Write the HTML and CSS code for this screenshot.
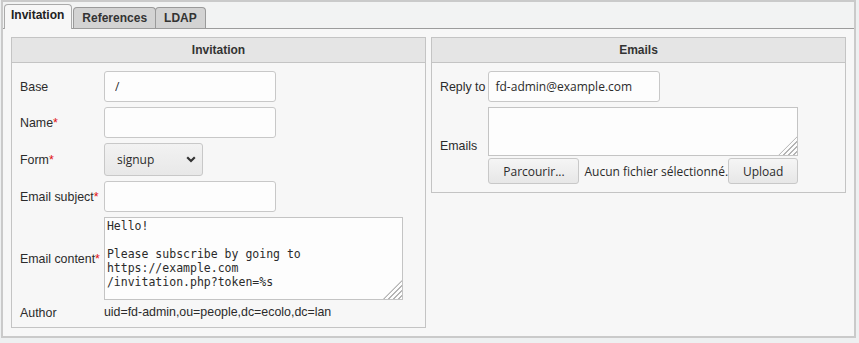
FILE: index.html
```html
<!DOCTYPE html>
<html lang="fr">
<head>
    <meta charset="UTF-8">
    <meta name="viewport" content="width=device-width, initial-scale=1.0">
    <title>Invitation</title>
    <link rel="stylesheet" href="styles.css">
</head>
<body>

    <div class="tabs-box">
        <ul class="tabs">
            <li class="tab active">Invitation</li>
            <li class="tab">References</li>
            <li class="tab">LDAP</li>
        </ul>

        <div class="tab-content">
            <section class="panel">
                <h3 class="panel-title">Invitation</h3>
                <div class="form-grid">
                    <label class="field-label">Base</label>
                    <div><input class="input input-base" type="text" value="/"></div>

                    <label class="field-label">Name<span class="req">*</span></label>
                    <div><input class="input" type="text"></div>

                    <label class="field-label">Form<span class="req">*</span></label>
                    <div>
                        <div class="select-wrap">
                            <select class="select">
                                <option>signup</option>
                            </select>
                            <svg class="chevron" width="10" height="7" viewBox="0 0 10 7">
                                <path d="M1.2 1.3 L5 5 L8.8 1.3" fill="none" stroke="#333" stroke-width="2.2"/>
                            </svg>
                        </div>
                    </div>

                    <label class="field-label">Email subject<span class="req">*</span></label>
                    <div><input class="input" type="text"></div>

                    <label class="field-label">Email content<span class="req">*</span></label>
                    <div class="area-wrap">
                        <textarea class="textarea textarea-content" spellcheck="false">Hello!

Please subscribe by going to https://example.com
/invitation.php?token=%s</textarea>
                    </div>

                    <label class="field-label">Author</label>
                    <div class="field-value">uid=fd-admin,ou=people,dc=ecolo,dc=lan</div>
                </div>
            </section>

            <section class="panel panel-short">
                <h3 class="panel-title">Emails</h3>
                <div class="form-grid form-grid-tight">
                    <label class="field-label">Reply to</label>
                    <div><input class="input input-reply" type="text" value="fd-admin@example.com"></div>

                    <label class="field-label">Emails</label>
                    <div class="stack">
                        <div class="area-wrap">
                            <textarea class="textarea textarea-emails"></textarea>
                        </div>
                        <div class="file-row">
                            <button class="btn btn-browse">Parcourir...</button>
                            <span class="file-name">Aucun fichier sélectionné.</span>
                            <button class="btn btn-upload">Upload</button>
                        </div>
                    </div>
                </div>
            </section>
        </div>
    </div>

</body>
</html>
```

FILE: styles.css
```css
* {
    margin: 0;
    padding: 0;
    box-sizing: border-box;
    font-family: "Liberation Sans", Arial, sans-serif;
}

body {
    background-color: #eef0f1;
    color: #2b2b2b;
    font-size: 12px;
}

.tabs-box {
    margin: 0 3px 0 1px;
    height: 338px;
    border: 2px solid #cacaca;
    display: flex;
    flex-direction: column;
}

/* tab strip */
.tabs {
    list-style: none;
    display: flex;
    align-items: flex-end;
    height: 27px;
    padding-left: 1px;
    background-color: #f2f3f3;
    border-bottom: 1px solid #9c9c9c;
}

.tab {
    height: 21px;
    padding: 3px 8px 0;
    font-size: 12px;
    font-weight: bold;
    line-height: 14px;
    color: #333;
    background-color: #d3d3d3;
    border: 1px solid #9a9a9a;
    border-bottom: none;
    border-radius: 4px 4px 0 0;
}

.tab + .tab {
    margin-left: -1px;
}

.tab.active {
    height: 25px;
    margin-bottom: -1px;
    margin-right: 2px;
    padding: 3px 7px 0 6px;
    color: #222;
    background-color: #f7f7f7;
    border-color: #aaa;
}

.tab-content {
    flex: 1;
    display: grid;
    grid-template-columns: 415px 415px;
    column-gap: 5px;
    align-items: start;
    padding: 8px 8px;
    background-color: #f7f7f7;
}

/* panels */
.panel {
    border: 1px solid #c4c4c4;
    background-color: #f7f7f7;
    padding-bottom: 7px;
}

.panel-short {
    padding-bottom: 8px;
}

.panel-title {
    height: 25px;
    line-height: 24px;
    text-align: center;
    font-size: 12px;
    font-weight: bold;
    color: #333;
    background-color: #e5e5e5;
    border-bottom: 1px solid #c4c4c4;
}

.form-grid {
    display: grid;
    grid-template-columns: auto 1fr;
    column-gap: 4px;
    row-gap: 5px;
    align-items: center;
    padding: 8px 8px 0 8px;
}

.form-grid-tight {
    column-gap: 3px;
}

.field-label {
    font-size: 12.4px;
    color: #2b2b2b;
    white-space: nowrap;
}

.req {
    color: #e01010;
}

.field-value {
    font-size: 12.4px;
    line-height: 15px;
    color: #2b2b2b;
}

/* inputs */
.input {
    display: block;
    width: 172px;
    height: 31px;
    padding: 0 6px;
    font-family: "Open Sans", sans-serif;
    font-size: 12px;
    color: #2b2b2b;
    background-color: #fdfdfd;
    border: 1px solid #c8c8c8;
    border-radius: 3px;
    outline: none;
}

.input-base {
    padding-left: 10px;
}

.select-wrap {
    position: relative;
    width: 99px;
    height: 33px;
}

.select {
    appearance: none;
    width: 100%;
    height: 100%;
    padding: 0 0 0 12px;
    font-family: "Open Sans", sans-serif;
    font-size: 12px;
    color: #2b2b2b;
    background: linear-gradient(#f2f2f2, #e8e8e8);
    border: 1px solid #c8c8c8;
    border-radius: 3px;
    outline: none;
}

.chevron {
    position: absolute;
    right: 7px;
    top: 13px;
    pointer-events: none;
}

.area-wrap {
    position: relative;
    width: max-content;
}

/* hatched resize grip */
.area-wrap::after {
    content: "";
    position: absolute;
    right: 1px;
    bottom: 1px;
    width: 19px;
    height: 19px;
    background: repeating-linear-gradient(135deg, transparent 0 2px, #b4b4b4 2px 3.6px);
    clip-path: polygon(100% 0, 100% 100%, 0 100%);
    pointer-events: none;
}

.textarea {
    display: block;
    resize: none;
    padding: 1px 2px;
    font-family: "DejaVu Sans Mono", monospace;
    font-size: 11.5px;
    line-height: 14px;
    color: #2b2b2b;
    background-color: #fdfdfd;
    border: 1px solid #c4c4c4;
    outline: none;
    overflow: hidden;
}

.textarea-content {
    width: 299px;
    height: 83px;
}

.textarea-emails {
    width: 310px;
    height: 49px;
}

.stack {
    display: flex;
    flex-direction: column;
    gap: 2px;
}

.file-row {
    display: flex;
    align-items: center;
}

.btn {
    height: 26px;
    font-family: "Open Sans", sans-serif;
    font-size: 12px;
    color: #2b2b2b;
    background: linear-gradient(#f5f5f5, #e7e7e7);
    border: 1px solid #c8c8c8;
    border-radius: 3px;
}

.btn-browse {
    width: 91px;
}

.btn-upload {
    width: 70px;
}

.file-name {
    margin: 0 0 0 5px;
    font-family: "Open Sans", sans-serif;
    font-size: 12px;
    color: #2b2b2b;
}
```
